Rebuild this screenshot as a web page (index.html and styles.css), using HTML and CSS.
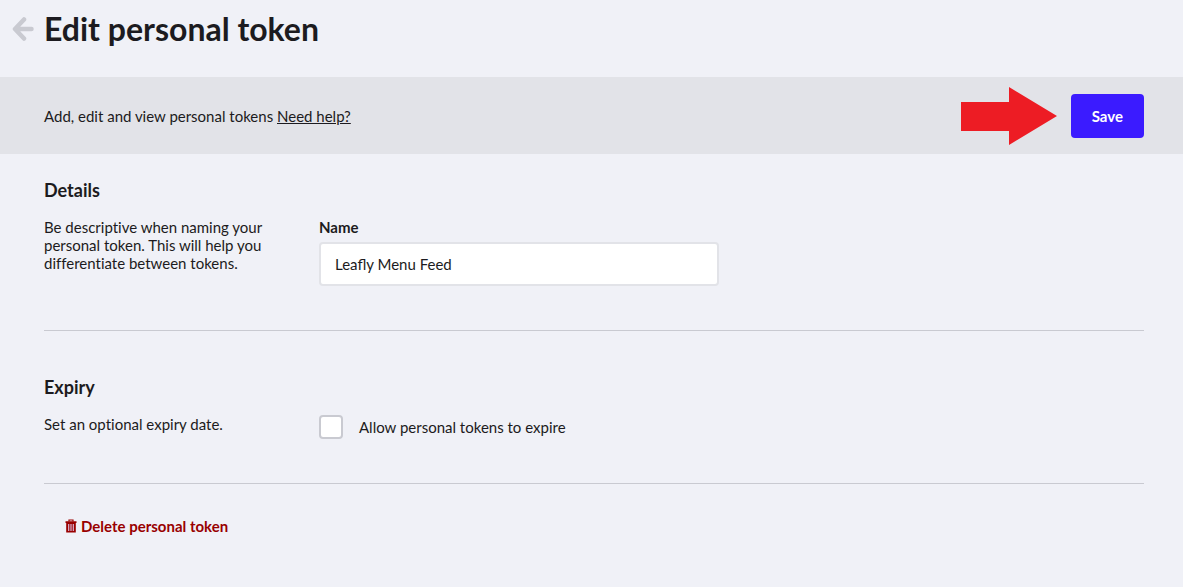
FILE: index.html
```html
<!DOCTYPE html>
<html lang="en">
<head>
  <meta charset="UTF-8">
  <meta name="viewport" content="width=device-width, initial-scale=1">
  <title>Edit personal token</title>
  <link rel="stylesheet" href="styles.css">
</head>
<body>

  <header class="page-header">
    <a class="back" href="#" aria-label="Back">
      <svg width="22" height="24" viewBox="0 0 22 24" fill="none" stroke="#c9cad1" stroke-width="4.500" stroke-linecap="round" stroke-linejoin="round">
        <path d="M12 2.500 L3 12 L12 21.500 M3.500 12 H19.500"/>
      </svg>
    </a>
    <h1>Edit personal token</h1>
  </header>

  <form>
    <div class="toolbar">
      <p>Add, edit and view personal tokens <a href="#">Need help?</a></p>
      <div class="actions">
        <svg width="96" height="58" viewBox="0 0 96 58" fill="#ed1c24" aria-hidden="true">
          <path d="M0 15 H48 V0 L96 29 L48 58 V44 H0 Z"/>
        </svg>
        <button class="save" type="submit">Save</button>
      </div>
    </div>

    <main class="content">
      <section class="section">
        <h2>Details</h2>
        <div class="row">
          <p class="hint">Be descriptive when naming your personal token. This will help you differentiate between tokens.</p>
          <div class="field">
            <label class="field-label" for="name">Name</label>
            <input class="text-input" type="text" id="name" value="Leafly Menu Feed">
          </div>
        </div>
      </section>

      <section class="section section-expiry">
        <h2>Expiry</h2>
        <div class="row">
          <p class="hint">Set an optional expiry date.</p>
          <div class="check">
            <input type="checkbox" id="expire">
            <label for="expire">Allow personal tokens to expire</label>
          </div>
        </div>
      </section>

      <button class="delete" type="button">
        <svg width="12" height="14" viewBox="0 0 12 14" aria-hidden="true">
          <path d="M4 2.500 V1 H8 V2.500" fill="none" stroke="#990000" stroke-width="1.200"/>
          <path d="M0.500 2.300 H11.500 V4 H0.500 Z M1.200 4 H10.800 V13.500 H1.200 Z" fill="#990000"/>
          <path d="M3.700 5 V12 M6 5 V12 M8.300 5 V12" stroke="#d9b6d6" stroke-width="1.200"/>
        </svg>
        Delete personal token
      </button>
    </main>
  </form>

</body>
</html>
```
FILE: styles.css
```css
* {
  box-sizing: border-box;
}

body {
  margin: 0;
  background-color: #f0f1f7;
  color: #1c1b20;
  font-family: Lato, sans-serif;
  font-size: 15px;
  line-height: 18px;
}

h1, h2, p {
  margin: 0;
}

button, input {
  font: inherit;
  color: inherit;
}

svg {
  display: block;
}

.page-header {
  display: flex;
  align-items: center;
  gap: 10px;
  padding: 9px 12px 28px;
}

h1 {
  font-size: 32px;
  font-weight: 700;
  line-height: 40px;
}

.toolbar {
  display: flex;
  align-items: center;
  justify-content: space-between;
  padding: 10px 39px 9px 44px;
  background-color: #e2e3e8;
}

.toolbar a {
  color: inherit;
}

.actions {
  display: flex;
  align-items: center;
  gap: 14px;
}

.save {
  height: 44px;
  padding: 0 21px;
  border: none;
  border-radius: 4px;
  background-color: #3b1bff;
  color: #ffffff;
  font-weight: 700;
  cursor: pointer;
}

.content {
  padding: 0 39px 0 44px;
}

.section {
  padding: 24px 0 44px;
  border-bottom: 1px solid #c9cad1;
}

.section-expiry {
  padding-top: 44px;
}

h2 {
  margin-bottom: 16px;
  font-size: 18px;
  font-weight: 700;
  line-height: 24px;
}

.row {
  display: flex;
  gap: 50px;
}

.hint {
  width: 225px;
  font-variant-ligatures: no-common-ligatures;
}

.field {
  flex: 1;
  max-width: 400px;
}

.field-label {
  display: block;
  margin-bottom: 6px;
  font-weight: 700;
}

.text-input {
  display: block;
  width: 100%;
  height: 44px;
  padding: 0 14px;
  border: 2px solid #e2e3e8;
  border-radius: 4px;
  background-color: #ffffff;
}

.check {
  display: flex;
  align-items: center;
  gap: 16px;
}

.check input {
  appearance: none;
  width: 24px;
  height: 24px;
  margin: 0;
  border: 2px solid #c9cad1;
  border-radius: 4px;
  background-color: #ffffff;
}

.check input:checked {
  background-color: #3b1bff;
}

.delete {
  display: flex;
  align-items: center;
  gap: 4px;
  margin-top: 21px;
  padding: 12px 21px;
  border: none;
  background: none;
  color: #990000;
  font-weight: 700;
  cursor: pointer;
}
```
